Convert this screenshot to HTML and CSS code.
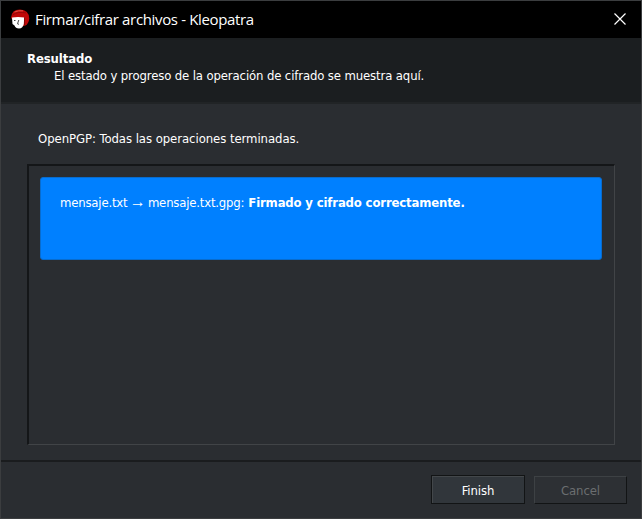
FILE: index.html
```html
<!DOCTYPE html>
<html lang="es">
<head>
<meta charset="utf-8">
<title>Firmar/cifrar archivos - Kleopatra</title>
<link rel="stylesheet" href="styles.css">
</head>
<body>
<main class="window">
  <header class="titlebar">
    <svg class="logo" viewBox="0 0 20 20" width="20" height="20" aria-hidden="true">
      <path d="M1 9Q1.500 .6 10 .6Q19 1 19.200 9.500Q19 14 15.500 16.500L13 17L2 10Z" fill="#c00808"/>
      <path d="M2.500 6Q8 2 16 4" fill="none" stroke="#930808" stroke-width="1"/>
      <path d="M4.500 3Q8.500 1.200 13 1.800" fill="none" stroke="#dc5548" stroke-width="1"/>
      <path d="M2 8.500Q8 7.500 14.200 8.500L13.800 15Q13 19.200 9 19.600Q5.500 19.400 4.500 16.500L2.500 15Z" fill="#fff"/>
      <path d="M4 11.500H5.500M8.800 11L7.500 14.800L9 15.300" fill="none" stroke="#444" stroke-width="1"/>
      <path d="M14.500 8.500V16" fill="none" stroke="#720707" stroke-width=".8"/>
    </svg>
    <h1 class="caption">Firmar/cifrar archivos - Kleopatra</h1>
    <svg class="close" viewBox="0 0 12 12" width="12" height="12" aria-label="Cerrar"><path d="M.5 .5L11.500 11.500M11.500 .5L.5 11.500" stroke="#fff" stroke-width="1.200"/></svg>
  </header>
  <section class="banner">
    <h2 class="heading">Resultado</h2>
    <p class="subtitle">El estado y progreso de la operación de cifrado se muestra aquí.</p>
  </section>
  <section class="content">
    <p class="status">OpenPGP: Todas las operaciones terminadas.</p>
    <div class="results">
      <div class="result"><span class="files">mensaje.txt <span class="arrow">→</span> mensaje.txt.gpg:</span><strong class="outcome">Firmado y cifrado correctamente.</strong></div>
    </div>
  </section>
  <footer class="actions">
    <button class="button primary">Finish</button>
    <button class="button" disabled>Cancel</button>
  </footer>
</main>
</body>
</html>
```
FILE: styles.css
```css
* { box-sizing: border-box; }
body { margin: 0; background: #2a2d31; color: #fff; font: 13px/16px "DejaVu Sans Condensed", "DejaVu Sans", sans-serif; }
h1, h2, p { margin: 0; }
.window { width: 642px; height: 519px; border: 1px solid #3b3d3f; display: flex; flex-direction: column; background: #2a2d31; }
.titlebar { height: 37px; flex: none; display: flex; align-items: center; padding: 0 15px 1px 9px; background: #000; }
.logo { margin-right: 5px; }
.caption { flex: 1; font: 400 15px/22px "Open Sans", sans-serif; letter-spacing: -.35px; white-space: nowrap; }
.close { display: block; }
.banner { height: 66px; flex: none; padding: 13px 26px 0; background: #1b1e20; border-bottom: 2px solid #212426; }
.heading { font-size: 13px; line-height: 16px; font-weight: 700; letter-spacing: -.1px; }
.subtitle { padding-left: 27px; line-height: 18px; letter-spacing: -.13px; white-space: nowrap; }
.content { flex: 1; padding: 26px 26px 15px; display: flex; flex-direction: column; }
.status { padding-left: 11px; margin-bottom: 17px; line-height: 17px; letter-spacing: -.06px; }
.results { flex: 1; border: 2px solid; border-color: #141618 #414447 #414447 #141618; border-right-width: 1px; border-bottom-width: 1px; padding: 11px 12px 0 11px; }
.result { height: 83px; border: 1px solid #086cce; border-radius: 3px; background: #0080ff; padding: 17px 19px 0; display: flex; gap: 4px; white-space: nowrap; }
.files { letter-spacing: -.19px; }
.arrow { margin: 0 -1.2px; font-family: "Liberation Sans", sans-serif; font-size: 16px; line-height: 0; }
.outcome { letter-spacing: -.16px; }
.actions { height: 58px; flex: none; border-top: 2px solid #1a1c1e; padding: 13px 14px 14px; display: flex; justify-content: flex-end; align-items: flex-end; gap: 9px; }
.button { width: 93px; height: 28px; margin: 0; padding: 2px 0 0; border: 1px solid; border-color: #3d4144 #121415 #121415 #3d4144; background: #2d3034; color: #6b6e70; font: inherit; letter-spacing: -.1px; }
.primary { width: 94px; height: 29px; border-color: #121415; box-shadow: inset 1px 1px #43474a; background: #31363b; color: #fff; }
```
